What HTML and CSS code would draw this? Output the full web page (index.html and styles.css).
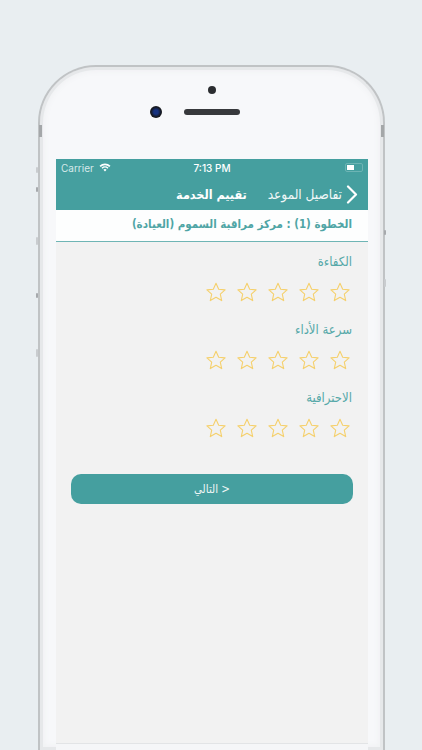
FILE: index.html
```html
<!DOCTYPE html>
<html lang="ar">
<head>
<meta charset="utf-8">
<title>تقييم الخدمة</title>
<link rel="stylesheet" href="styles.css">
</head>
<body>
<svg class="defs" width="0" height="0" aria-hidden="true">
  <symbol id="star" viewBox="0 0 20 20">
    <path d="M10 1.2l2.7 6 6.4.7-4.8 4.3 1.4 6.4L10 15.3l-5.7 3.3 1.4-6.4L.9 7.9l6.4-.7z" fill="none" stroke="#f5d06c" stroke-width="1.1" stroke-linejoin="round"/>
  </symbol>
</svg>
<div class="phone">
  <span class="btn btn-l1"></span>
  <span class="btn btn-l2"></span>
  <span class="btn btn-l3"></span>
  <span class="btn btn-l4"></span>
  <span class="btn btn-l5"></span>
  <span class="btn btn-r1"></span>
  <span class="btn btn-r2"></span>
  <span class="band band-l"></span>
  <span class="band band-r"></span>
  <div class="bezel">
    <div class="sensor"></div>
    <div class="cam-row">
      <div class="camera"></div>
      <div class="speaker"></div>
    </div>
  </div>
  <div class="screen">
    <header class="head">
      <div class="status">
        <div class="status-left">
          <span>Carrier</span>
          <svg class="wifi" width="12" height="9" viewBox="0 0 12 9"><path d="M6 8.6L4.4 6.8a2.3 2.3 0 0 1 3.2 0zM3.5 5.8L2.5 4.7a5 5 0 0 1 7 0L8.500 5.800a3.500 3.500 0 0 0-5 0zM1.700 3.900L.5 2.700a7.800 7.800 0 0 1 11 0L10.300 3.900a6.200 6.200 0 0 0-8.600 0z" fill="#fff"/></svg>
        </div>
        <span class="time">7:13 PM</span>
        <div class="battery"><span class="level"></span></div>
      </div>
      <nav class="nav" dir="rtl">
        <svg class="chev" width="12" height="19" viewBox="0 0 12 19"><path d="M2 1.500l8 8-8 8" fill="none" stroke="#fff" stroke-width="2.200" stroke-linecap="round" stroke-linejoin="round"/></svg>
        <span class="back">تفاصيل الموعد</span>
        <span class="title">تقييم الخدمة</span>
      </nav>
    </header>
    <div class="step" dir="rtl">الخطوة (1) : مركز مراقبة السموم (العيادة)</div>
    <main class="body" dir="rtl">
      <section class="rate">
        <h2 class="label">الكفاءة</h2>
        <div class="stars">
          <svg class="star"><use href="#star"/></svg><svg class="star"><use href="#star"/></svg><svg class="star"><use href="#star"/></svg><svg class="star"><use href="#star"/></svg><svg class="star"><use href="#star"/></svg>
        </div>
      </section>
      <section class="rate">
        <h2 class="label">سرعة الأداء</h2>
        <div class="stars">
          <svg class="star"><use href="#star"/></svg><svg class="star"><use href="#star"/></svg><svg class="star"><use href="#star"/></svg><svg class="star"><use href="#star"/></svg><svg class="star"><use href="#star"/></svg>
        </div>
      </section>
      <section class="rate">
        <h2 class="label">الاحترافية</h2>
        <div class="stars">
          <svg class="star"><use href="#star"/></svg><svg class="star"><use href="#star"/></svg><svg class="star"><use href="#star"/></svg><svg class="star"><use href="#star"/></svg><svg class="star"><use href="#star"/></svg>
        </div>
      </section>
      <button class="next" type="button">&lt; التالي</button>
    </main>
    <div class="foot"></div>
  </div>
</div>
</body>
</html>
```
FILE: styles.css
```css
* { box-sizing: border-box; }
html, body { margin: 0; height: 750px; overflow: hidden; }
body {
  background: #e9eef1;
  padding: 65px 0 0 38px;
  font-family: "DejaVu Sans Condensed", "DejaVu Sans", "Noto Sans", sans-serif;
}
.defs { position: absolute; }
.phone {
  position: relative;
  width: 347px;
  height: 685px;
  padding: 0 15px 0 16px;
  background: #f7f8fa;
  border: 2px solid #c0c3c5;
  border-bottom: 0;
  border-radius: 58px 58px 0 0 / 58px 58px 0 0;
  box-shadow: inset 0 0 0 3px #e6e8ea, inset 0 0 5px 5px #f1f2f4;
}
.band { position: absolute; top: 58px; width: 3px; height: 12px; background: #a4a7a9; }
.band-l { left: -1px; }
.band-r { right: -1px; }
.btn { position: absolute; width: 2px; background: #c9cccf; border-radius: 1px; }
.btn-l1 { left: -4px; top: 100px; height: 6px; }
.btn-l2 { left: -4px; top: 120px; height: 5px; background: #a6a9ac; }
.btn-l3 { left: -4px; top: 170px; height: 8px; }
.btn-l4 { left: -4px; top: 226px; height: 5px; background: #a6a9ac; }
.btn-l5 { left: -4px; top: 282px; height: 8px; }
.btn-r1 { right: -3px; top: 163px; height: 5px; background: #a6a9ac; }
.btn-r2 { right: -3px; top: 212px; height: 8px; }
.bezel {
  height: 92px;
  padding-top: 19px;
  display: flex;
  flex-direction: column;
  align-items: center;
}
.sensor { width: 8px; height: 8px; border-radius: 50%; background: #2b2d30; }
.cam-row {
  align-self: flex-start;
  display: flex;
  align-items: center;
  gap: 22px;
  margin: 12px 0 0 94px;
}
.camera {
  width: 12px;
  height: 12px;
  border-radius: 50%;
  background: radial-gradient(circle, #16327f 0, #16327f 25%, #15181d 60%, #2a2c30 100%);
}
.speaker { width: 56px; height: 6px; border-radius: 3px; background: #37393c; }
.screen {
  width: 312px;
  height: 591px;
  display: flex;
  flex-direction: column;
  background: #f2f2f2;
}
.head { background: #459f9f; color: #fff; }
.status {
  height: 19px;
  padding: 0 5px 2px;
  display: grid;
  grid-template-columns: 1fr auto 1fr;
  align-items: center;
  font: 10px "Inter", "Liberation Sans", sans-serif;
  color: #d6eaea;
}
.status-left { display: flex; align-items: center; gap: 5px; }
.time { font-weight: 500; color: #fff; }
.battery {
  justify-self: end;
  width: 18px;
  height: 9px;
  padding: 1px;
  border: 1px solid #6db4b4;
  border-radius: 2px;
}
.level { display: block; width: 7px; height: 100%; background: #fff; }
.nav {
  height: 32px;
  padding-right: 10px;
  display: flex;
  align-items: center;
  font-size: 13.5px;
}
.chev { margin-left: 4px; }
.back { color: #f0f7f7; }
.title { margin-right: 21px; font-size: 12.5px; font-weight: 700; }
.step {
  height: 32px;
  padding: 0 16px 3px;
  display: flex;
  align-items: center;
  background: #fdfefe;
  border-bottom: 1px solid #6fb5b5;
  color: #4fa5a5;
  font-size: 11.5px;
  font-weight: 700;
}
.body { flex: 1; padding: 0 15px 0 15px; }
.rate { height: 68px; padding-top: 10px; }
.label {
  margin: 0;
  height: 20px;
  line-height: 20px;
  padding-right: 1px;
  color: #55a8a8;
  font-size: 13px;
  font-weight: 400;
}
.stars { display: flex; gap: 11px; margin: 0 3px; padding-top: 10px; }
.star { width: 20px; height: 20px; }
.next {
  display: block;
  width: 282px;
  height: 30px;
  margin: 28px 0 0;
  border: 0;
  border-radius: 10px;
  background: #459f9f;
  color: #eef6f6;
  font: 400 11.5px "DejaVu Sans Condensed", "DejaVu Sans", sans-serif;
}
.foot { height: 7px; border-top: 1px solid #e2e4e6; background: #f5f6f8; }
```
